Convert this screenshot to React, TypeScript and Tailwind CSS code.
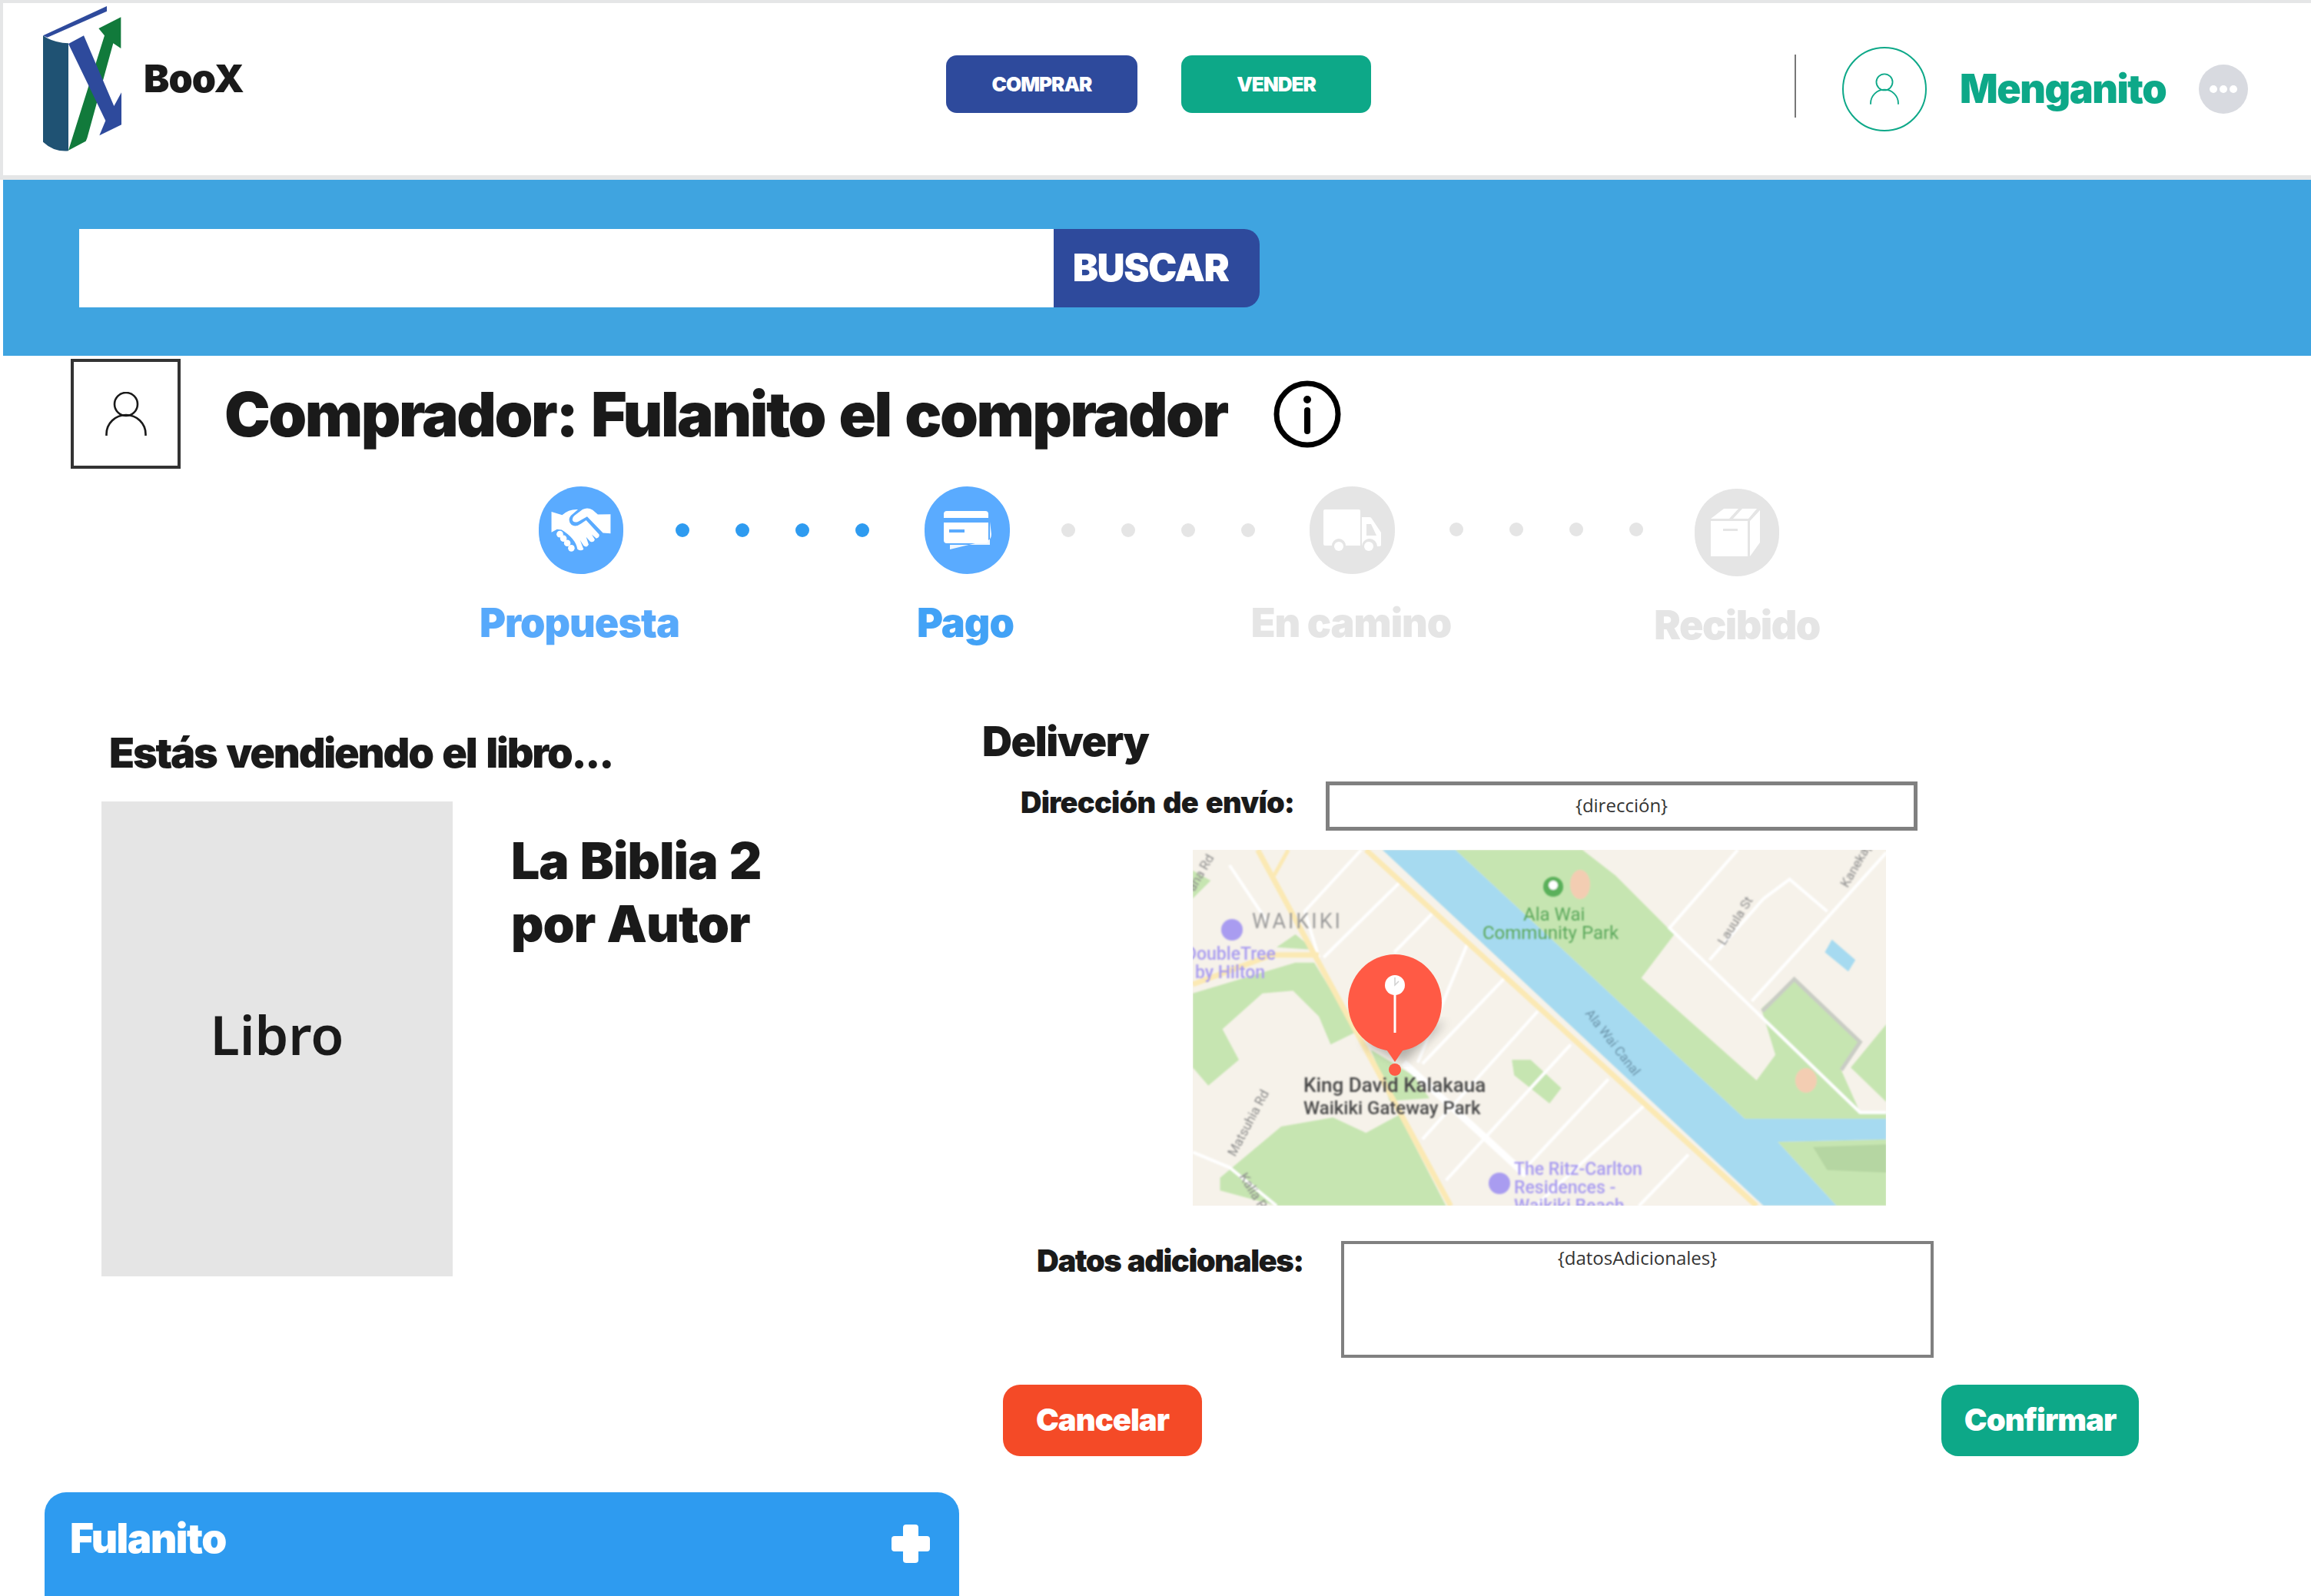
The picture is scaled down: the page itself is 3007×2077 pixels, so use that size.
// the map drawing was measured on a crop, so points get scaled down to map pixels
const pt = (list: number[][]) =>
  list.map(([x, y]) => `${((x - 52) / 1.633).toFixed(1)},${((y - 50) / 3).toFixed(1)}`).join(' ');

const whiteRoads = [
  [[410, 50], [290, 290], [320, 470]],
  [[490, 180], [330, 470]],
  [[130, 110], [210, 330]],
  [[560, 300], [480, 450]],
  [[635, 420], [530, 880]],
  [[715, 550], [540, 885]],
  [[785, 680], [540, 1180]],
  [[855, 810], [590, 1340]],
  [[935, 945], [760, 1290]],
  [[1010, 1050], [780, 1440]],
  [[1105, 1240], [1000, 1440]],
  [[1210, 50], [1065, 355], [1470, 1075], [1526, 1075]],
  [[1265, 240], [1150, 480]],
  [[1265, 240], [1320, 165], [1400, 290]],
  [[1526, 60], [1240, 640]],
  [[52, 1230], [130, 1290], [230, 1440]],
];

function UserGlyph({ className }: { className: string }) {
  return (
    <svg viewBox="0 0 54 58" fill="none" stroke="currentColor" strokeWidth="2.6" className={className}>
      <circle cx="27" cy="16" r="15" />
      <path d="M1.5 57V55C1.5 41 13 30 27 30S52.500 41 52.500 55V57" />
    </svg>
  );
}

function Logo() {
  return (
    <svg viewBox="78 25 306 570" className="w-[102px] h-[190px] shrink-0 mb-[26px]">
      <path d="M78 140L327 25V45L95 147Z" fill="#2e4a9c" />
      <path d="M78 140L95 150Q130 168 177 170V590Q120 595 78 555Z" fill="#1f5273" />
      <path d="M177 588L318 140L295 112L382 68V190L352 170L250 540L245 552Z" fill="#117a3b" />
      <path d="M177 172L237 140L355 415L384 362V488L298 530L322 472Z" fill="#2e4a9c" />
    </svg>
  );
}

function Handshake() {
  return (
    <svg viewBox="110 130 232 175" className="w-[78px] h-[58px]" fill="#ffffff">
      <path d="M110 145L152 158Q178 134 214 136L186 160Q172 178 188 196Q204 208 226 192L246 178L297 234Q300 246 286 250L268 234L280 254Q276 268 262 262L246 244L256 274Q248 288 236 278L222 256L236 292Q226 302 212 292Q205 250 150 216L132 214L110 226Z" />
      <path d="M342 155V230L312 228L250 164L214 184Q196 190 192 176Q192 166 200 160L232 136Q252 126 272 138L292 156Z" />
      <circle cx="143" cy="233" r="13" />
      <circle cx="157" cy="250" r="13" />
      <circle cx="172" cy="268" r="13" />
      <circle cx="188" cy="288" r="13" />
    </svg>
  );
}

function StepDots({ active, className }: { active?: boolean; className: string }) {
  return (
    <div className={`flex items-center gap-[60px] ${className}`}>
      {[0, 1, 2, 3].map((i) => (
        <span key={i} className={active ? 'w-[18px] h-[18px] rounded-full bg-[#2e9bf0]' : 'w-[18px] h-[18px] rounded-full bg-[#e5e5e5]'} />
      ))}
    </div>
  );
}

function MapPicture() {
  return (
    <svg viewBox="0 0 902 463" className="w-[902px] h-[463px] block">
      <defs>
        <filter id="soft"><feGaussianBlur stdDeviation="1.3" /></filter>
        <filter id="softer"><feGaussianBlur stdDeviation="0.8" /></filter>
        <filter id="shade"><feGaussianBlur stdDeviation="7" /></filter>
      </defs>
      <rect width="902" height="463" fill="#f6f2ea" />
      <g filter="url(#soft)">
        <polygon fill="#c6e5b1" points={pt([[610, 50], [880, 50], [950, 150], [1075, 380], [1005, 550], [1250, 950], [1290, 850], [1260, 670], [1330, 550], [1470, 800], [1430, 910], [1470, 1075], [1526, 1075], [1526, 1100], [1225, 1100]])} />
        <polygon fill="#c6e5b1" points={pt([[1526, 730], [1450, 900], [1526, 1035]])} />
        <polygon fill="#c6e5b1" points={pt([[1295, 1190], [1526, 1180], [1526, 1440], [1420, 1440]])} />
        <polygon fill="#b5d6a2" points={pt([[1370, 1210], [1526, 1200], [1526, 1310], [1400, 1300]])} />
        <polygon fill="#c6e5b1" points={pt([[52, 610], [270, 490], [310, 490], [400, 760], [345, 810], [320, 700], [265, 600], [200, 610], [115, 750], [150, 870], [85, 970], [52, 900]])} />
        <polygon fill="#c6e5b1" points={pt([[110, 1330], [240, 1130], [350, 1095], [420, 1155], [490, 1085], [590, 1440], [230, 1440], [110, 1380]])} />
        <polygon fill="#c6e5b1" points={pt([[430, 830], [520, 930], [555, 1020], [470, 1030], [450, 920]])} />
        <polygon fill="#c6e5b1" points={pt([[730, 870], [770, 870], [835, 980], [810, 1040], [735, 930]])} />
        <polygon fill="#c6e5b1" points={pt([[52, 130], [90, 170], [52, 240]])} />
        <polygon fill="#c6e5b1" points={pt([[230, 430], [270, 380], [310, 440]])} />
        <polygon fill="#a6daf0" points={pt([[455, 50], [610, 50], [1225, 1100], [1526, 1100], [1526, 1180], [1295, 1190], [1420, 1440], [1265, 1440]])} />
        <polygon fill="#a6daf0" points={pt([[1410, 400], [1460, 480], [1445, 525], [1395, 450]])} />
        <ellipse cx={(875 - 52) / 1.633} cy={(185 - 50) / 3} rx="13" ry="19" fill="#f3cdb2" />
        <ellipse cx={(1355 - 52) / 1.633} cy={(950 - 50) / 3} rx="14" ry="16" fill="#f3cdb2" />
        {whiteRoads.map((road, i) => (
          <polyline key={i} points={pt(road)} fill="none" stroke="#ffffff" strokeWidth="4" />
        ))}
        <polyline points={pt([[500, 880], [760, 1320]])} fill="none" stroke="#ffffff" strokeWidth="9" />
        <polyline points={pt([[1262, 680], [1330, 555], [1470, 800], [1430, 910]])} fill="none" stroke="#c9ccc4" strokeWidth="5" />
        <polyline points={pt([[420, 50], [1250, 1440]])} fill="none" stroke="#fbe9b4" strokeWidth="7" />
        <polyline points={pt([[190, 50], [600, 1440]])} fill="none" stroke="#fbe9b4" strokeWidth="7" />
        <polyline points={pt([[255, 50], [225, 150]])} fill="none" stroke="#fbe9b4" strokeWidth="5" />
        <polyline points={pt([[52, 575], [220, 460], [320, 460]])} fill="none" stroke="#fbe9b4" strokeWidth="7" />
      </g>
      <polygon fill="#000000" opacity="0.28" filter="url(#shade)" points={pt([[410, 800], [590, 720], [500, 880]])} />
      <g filter="url(#softer)" fontFamily="Roboto, sans-serif">
        <text x="77" y="102" fontSize="27" fill="#9b9b9b" letterSpacing="3">WAIKIKI</text>
        <circle cx="51" cy="104" r="14" fill="#a99cf0" />
        <text x="-10" y="143" fontSize="23" fill="#a99cf0" fontWeight="500">DoubleTree</text>
        <text x="3" y="167" fontSize="23" fill="#a99cf0" fontWeight="500">by Hilton</text>
        <circle cx="469" cy="48" r="13" fill="#5ab05a" />
        <circle cx="469" cy="46" r="6" fill="#ffffff" />
        <text x="430" y="92" fontSize="24" fill="#5ba85c">Ala Wai</text>
        <text x="377" y="116" fontSize="24" fill="#5ba85c">Community Park</text>
        <text x="144" y="315" fontSize="26" fill="#4a4a4a" fontWeight="500">King David Kalakaua</text>
        <text x="144" y="344" fontSize="24" fill="#4a4a4a" fontWeight="500">Waikiki Gateway Park</text>
        <circle cx="399" cy="434" r="14" fill="#a99cf0" />
        <text x="418" y="423" fontSize="23" fill="#a99cf0" fontWeight="500">The Ritz-Carlton</text>
        <text x="418" y="447" fontSize="23" fill="#a99cf0" fontWeight="500">Residences -</text>
        <text x="418" y="471" fontSize="23" fill="#a99cf0" fontWeight="500">Waikiki Beach</text>
        <text transform="translate(510 213) rotate(52)" fontSize="17" fill="#6b93a8">Ala Wai Canal</text>
        <text transform="translate(692 125) rotate(-58)" fontSize="17" fill="#8b8b8b">Lauula St</text>
        <text transform="translate(852 50) rotate(-60)" fontSize="17" fill="#8b8b8b">Kanekapolei</text>
        <text transform="translate(55 400) rotate(-62)" fontSize="17" fill="#8b8b8b">Matsuhia Rd</text>
        <text transform="translate(60 425) rotate(58)" fontSize="17" fill="#8b8b8b">Kalia Rd</text>
        <text transform="translate(2 55) rotate(-60)" fontSize="17" fill="#8b8b8b">ana Rd</text>
      </g>
      <g transform="translate(0 4)">
        <ellipse cx="263" cy="195" rx="61" ry="63" fill="#ff5a45" />
        <polygon fill="#ff5a45" points="248,250 278,250 263,272" />
        <circle cx="263" cy="282" r="8" fill="#ff5a45" />
        <circle cx="263" cy="172" r="13" fill="#ffffff" />
        <rect x="261.500" y="180" width="3" height="54" fill="#ffffff" />
        <path d="M263 162V172L268 167" stroke="#d0d0d0" strokeWidth="1.500" fill="none" />
      </g>
    </svg>
  );
}

export default function App() {
  return (
    <div className="w-[3007px] h-[2077px] overflow-hidden bg-white text-[#1a1a1a] font-[Inter,sans-serif]">
      {/* top bar */}
      <header className="h-[234px] box-border border-t-[4px] border-l-[4px] border-b-[6px] border-[#e5e6e7] flex items-center">
        <div className="w-[1227px] flex items-center pl-[52px]">
          <Logo />
          <span className="ml-[29px] mb-[28px] text-[50px] leading-none font-black tracking-[-1px]">BooX</span>
        </div>
        <button className="w-[249px] h-[75px] mb-[14px] rounded-[14px] bg-[#2e4a9c] text-white text-[26px] font-black tracking-[-1px]">COMPRAR</button>
        <button className="w-[247px] h-[75px] mb-[14px] ml-[57px] rounded-[14px] bg-[#0da888] text-white text-[26px] font-black tracking-[-1px]">VENDER</button>
        <div className="w-[2px] h-[82px] mb-[8px] ml-[551px] bg-[#777777]" />
        <div className="w-[110px] h-[110px] ml-[60px] rounded-full border-[2px] border-[#0da888] flex items-center justify-center text-[#0da888]">
          <UserGlyph className="w-[38px] h-[42px]" />
        </div>
        <span className="w-[269px] ml-[43px] text-[52px] leading-none font-black tracking-[-1.5px] text-[#0da888]">Menganito</span>
        <div className="w-[64px] h-[64px] ml-[42px] rounded-full bg-[#d8dae0] flex items-center justify-center gap-[3px]">
          <span className="w-[10px] h-[10px] rounded-full bg-white" />
          <span className="w-[10px] h-[10px] rounded-full bg-white" />
          <span className="w-[10px] h-[10px] rounded-full bg-white" />
        </div>
      </header>

      {/* search */}
      <section className="h-[229px] ml-[4px] bg-[#3fa4e0] flex items-center pl-[99px]">
        <div className="w-[1268px] h-[102px] bg-white" />
        <button className="w-[268px] h-[102px] rounded-r-[20px] bg-[#2e4a9c] pr-[16px] text-white text-[50px] font-black tracking-[-1.5px]">BUSCAR</button>
      </section>

      {/* buyer title */}
      <div className="h-[151px] flex items-center pl-[92px]">
        <div className="w-[143px] h-[143px] box-border border-[4px] border-[#333333] flex items-center justify-center text-[#1a1a1a]">
          <UserGlyph className="w-[54px] h-[58px]" />
        </div>
        <h1 className="ml-[57px] w-[1309px] text-[80px] leading-none font-black tracking-[-2.5px] [word-spacing:5px] whitespace-nowrap">Comprador: Fulanito el comprador</h1>
        <svg viewBox="0 0 88 88" className="w-[88px] h-[88px] ml-[56px] shrink-0" fill="none" stroke="#000000" strokeWidth="7">
          <circle cx="44" cy="44" r="40" />
          <path d="M44 39V66" strokeWidth="8" strokeLinecap="round" />
          <circle cx="44" cy="25" r="5" fill="#000000" stroke="none" />
        </svg>
      </div>

      {/* stepper */}
      <div className="mt-[19px] h-[117px] flex items-start pl-[701px]">
        <div className="w-[110px] h-[114px] rounded-full bg-[#5aabff] flex items-center justify-center shrink-0">
          <Handshake />
        </div>
        <StepDots active className="ml-[68px] h-[114px]" />
        <div className="w-[111px] h-[114px] ml-[72px] rounded-full bg-[#5aabff] flex items-center justify-center shrink-0">
          <svg viewBox="0 0 62 50" className="w-[62px] h-[50px]">
            <path d="M8 44H60V14L62 30Q62 36 58 38L8 50Z" fill="#ffffff" opacity="0.9" />
            <rect x="0" y="0" width="58" height="42" rx="4" fill="#ffffff" />
            <rect x="0" y="9" width="58" height="6" fill="#5aabff" />
            <rect x="7" y="24" width="20" height="4" fill="#5aabff" />
          </svg>
        </div>
        <StepDots className="ml-[67px] h-[114px]" />
        <div className="w-[111px] h-[114px] ml-[71px] rounded-full bg-[#e5e5e5] flex items-center justify-center shrink-0">
          <svg viewBox="0 0 76 54" className="w-[76px] h-[54px]" fill="#ffffff">
            <path d="M2 0H46Q48 0 48 2V47H29A9 9 0 0 0 11 47H2Q0 47 0 45V2Q0 0 2 0Z" />
            <path d="M50 10H60Q62 10 63 12L75 30V46Q75 48 72 48H70A10 10 0 0 0 50 48Z" />
            <path d="M56 19H62L69 34H56Z" fill="#e5e5e5" />
            <circle cx="20" cy="48" r="6" />
            <circle cx="59" cy="48" r="6" />
          </svg>
        </div>
        <StepDots className="ml-[71px] h-[112px]" />
        <div className="w-[110px] h-[114px] mt-[3px] ml-[67px] rounded-full bg-[#e5e5e5] flex items-center justify-center shrink-0">
          <svg viewBox="0 0 68 62" className="w-[68px] h-[62px]" fill="#ffffff">
            <polygon points="0,13 17,0 36,0 24,13" />
            <polygon points="29,13 41,0 60,0 49,13" />
            <rect x="0" y="16" width="48" height="46" />
            <rect x="16" y="26" width="19" height="3" fill="#e5e5e5" />
            <polygon points="51,16 64,2 64,44 51,62" />
          </svg>
        </div>
      </div>

      {/* step labels */}
      <div className="mt-[26px] h-[70px] flex pl-[503px] text-[52px] leading-[70px] font-black tracking-[-1px] text-center">
        <span className="w-[502px] text-[#57a9fb]">Propuesta</span>
        <span className="w-[502px] text-[#42a2f6]">Pago</span>
        <span className="w-[502px] text-[#e5e5e5]">En camino</span>
        <span className="w-[502px] text-[#e5e5e5] pt-[3px] tracking-[-1.5px]">Recibido</span>
      </div>

      <main className="flex">
        {/* book */}
        <div className="w-[1277px] shrink-0 pt-[104px]">
          <h2 className="ml-[142px] text-[54px] leading-[60px] font-black tracking-[-2.2px] [word-spacing:4px] whitespace-nowrap">Estás vendiendo el libro...</h2>
          <div className="flex ml-[132px] mt-[33px] items-start">
            <div className="w-[457px] h-[618px] pb-[12px] bg-[#e5e5e5] flex items-center justify-center text-[70px] font-semibold font-[Noto_Sans,sans-serif]">Libro</div>
            <p className="ml-[76px] mt-[36px] text-[66px] leading-[82px] font-black tracking-[-1px] [word-spacing:3px] whitespace-nowrap">La Biblia 2<br />por Autor</p>
          </div>
          <div className="ml-[58px] mt-[281px] w-[1190px] h-[140px] rounded-t-[28px] bg-[#2e9bf0] flex items-start justify-between pl-[33px] pr-[38px] pt-[30px] text-white">
            <span className="text-[53px] leading-[60px] font-black tracking-[-1.5px]">Fulanito</span>
            <svg viewBox="0 0 50 50" className="w-[50px] h-[50px] mt-[12px]" fill="#ffffff">
              <rect x="15" y="0" width="20" height="50" rx="4" />
              <rect x="0" y="15" width="50" height="20" rx="4" />
            </svg>
          </div>
        </div>

        {/* delivery */}
        <div className="flex-1 pt-[89px]">
          <h2 className="ml-[1px] text-[54px] leading-[60px] font-black tracking-[-1.5px]">Delivery</h2>
          <div className="mt-[21px] flex items-center">
            <label className="w-[448px] pl-[51px] pb-[8px] text-[38px] font-black tracking-[-0.8px] [word-spacing:3px] whitespace-nowrap">Dirección de envío:</label>
            <div className="w-[770px] h-[64px] pb-[2px] box-border border-[5px] border-[#808080] flex items-center justify-center text-[24px] font-[Open_Sans,sans-serif] text-[#333333]">{'{dirección}'}</div>
          </div>
          <div className="mt-[25px] ml-[275px] w-[902px] h-[463px]">
            <MapPicture />
          </div>
          <div className="mt-[46px] flex items-start">
            <label className="w-[468px] pl-[72px] text-[40px] leading-[52px] font-black tracking-[-1.5px] [word-spacing:2px] whitespace-nowrap">Datos adicionales:</label>
            <div className="w-[771px] h-[152px] box-border border-[4px] border-[#808080] text-center text-[24px] font-[Open_Sans,sans-serif] text-[#333333]">{'{datosAdicionales}'}</div>
          </div>
          <div className="mt-[35px] flex">
            <button className="ml-[28px] w-[259px] h-[93px] pb-[2px] rounded-[22px] bg-[#f44a27] text-white text-[40px] font-black tracking-[-1px]">Cancelar</button>
            <button className="ml-[962px] w-[257px] h-[93px] pb-[2px] rounded-[22px] bg-[#0da888] text-white text-[40px] font-black tracking-[-1px]">Confirmar</button>
          </div>
        </div>
      </main>
    </div>
  );
}
